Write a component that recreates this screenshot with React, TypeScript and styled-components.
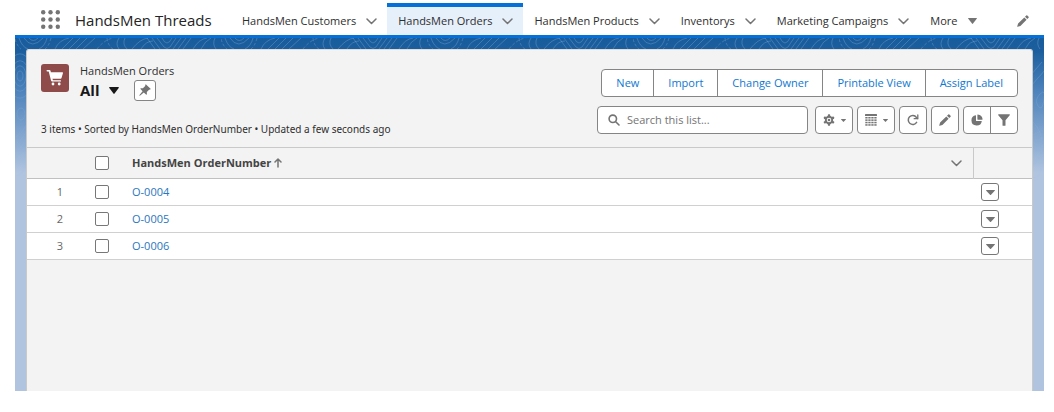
import React from "react";
import styled, { createGlobalStyle, css } from "styled-components";

const GlobalStyle = createGlobalStyle`
  *, *::before, *::after { box-sizing: border-box; }
  html, body, #root { height: 100%; }
  body {
    margin: 0;
    background: #fff;
    color: #2e2e2e;
    font-family: "Open Sans", "Noto Sans", sans-serif;
    font-size: 11px;
    line-height: 16px;
  }
  button, input { font: inherit; color: inherit; margin: 0; }
  svg { display: block; flex: none; }
`;

const Page = styled.div`
  display: flex;
  flex-direction: column;
  min-height: 100%;
  padding: 0 10px 21px 15px;
`;

const NavBar = styled.nav`
  display: flex;
  align-items: stretch;
  height: 35px;
  padding: 3px 15px 0 26px;
  flex: none;
`;

const PlainButton = styled.button`
  display: flex;
  align-items: center;
  justify-content: center;
  padding: 0;
  border: 0;
  background: none;
  color: #747474;
  cursor: pointer;
`;

const AppName = styled.span`
  width: 156px;
  margin-left: 15px;
  padding-top: 4px;
  font-size: 15px;
  line-height: 26px;
  color: #242424;
  white-space: nowrap;
`;

const Tab = styled.div<{ $active?: boolean }>`
  display: flex;
  align-items: center;
  gap: 10px;
  padding: 0 10px 0 11px;
  border-top: 4px solid transparent;
  color: #747474;
  white-space: nowrap;
  ${(p) =>
    p.$active &&
    css`
      border-top-color: #0470d8;
      background: #e6f0fb;
    `}
`;

const TabLink = styled.a`
  color: #2e2e2e;
  text-decoration: none;
`;

const EditNav = styled(PlainButton)`
  margin-left: auto;
  padding-top: 4px;
`;

const Backdrop = styled.main`
  position: relative;
  display: flex;
  flex: 1;
  padding: 11px 11px 0;
  border-top: 3px solid #0470d8;
  background: linear-gradient(#195c9b, #1d5f9e 14px, #4a80ba 50px, #b0c4e0 135px);
`;

const Contours = styled.svg`
  position: absolute;
  inset: 0;
  width: 100%;
  height: 180px;
`;

const Panel = styled.section`
  position: relative;
  flex: 1;
  min-width: 0;
  border: 1px solid #c9c9c9;
  border-top-color: #dcdcdc;
  border-bottom: 0;
  border-radius: 3px 3px 0 0;
  background: #f3f3f3;
`;

const PanelHeader = styled.header`
  display: flex;
  justify-content: space-between;
  height: 97px;
  padding: 14px 14px 0;
`;

const Heading = styled.div`
  display: flex;
  flex-direction: column;
  justify-content: space-between;
  padding-bottom: 10px;
`;

const TitleRow = styled.div`
  display: flex;
  gap: 11px;
`;

const ObjectIcon = styled.span`
  display: grid;
  place-items: center;
  width: 28px;
  height: 28px;
  border-radius: 3px;
  background: #8f4a4a;
`;

const ObjectName = styled.div`
  line-height: 14px;
`;

const ViewRow = styled.div`
  display: flex;
  align-items: center;
  gap: 9px;
  margin-top: 1px;
`;

const ViewName = styled.h1`
  margin: 0;
  font-size: 15px;
  line-height: 22px;
  font-weight: 700;
  color: #181818;
`;

const PinButton = styled(PlainButton)`
  width: 22px;
  height: 21px;
  margin-left: 6px;
  border: 1px solid #858585;
  border-radius: 3px;
  background: #fff;
`;

const Status = styled.p`
  margin: 0;
  font-family: "Noto Sans", sans-serif;
  font-size: 10px;
`;

const Actions = styled.div`
  display: flex;
  flex-direction: column;
  align-items: flex-end;
  gap: 9px;
  padding-top: 5px;
`;

const ButtonGroup = styled.div`
  display: flex;
  border: 1px solid #858585;
  border-radius: 4px;
  background: #fff;
  overflow: hidden;
`;

const ActionButton = styled(PlainButton)`
  height: 26px;
  padding: 0 14px;
  color: #0f78d0;
  & + & { border-left: 1px solid #858585; }
`;

const Toolbar = styled.div`
  display: flex;
  gap: 4px;
`;

const SearchBox = styled.label`
  display: flex;
  align-items: center;
  gap: 7px;
  width: 211px;
  height: 28px;
  margin-right: 3px;
  padding: 0 10px;
  border: 1px solid #858585;
  border-radius: 4px;
  background: #fff;
  color: #747474;
`;

const SearchInput = styled.input`
  flex: 1;
  min-width: 0;
  padding: 0;
  border: 0;
  outline: 0;
  background: none;
  &::placeholder { color: #747474; opacity: 1; }
`;

const ToolButton = styled(PlainButton)<{ $wide?: boolean }>`
  gap: 6px;
  width: ${(p) => (p.$wide ? 36 : 26)}px;
  height: 26px;
  & + & { width: 27px; border-left: 1px solid #858585; }
`;

const Table = styled.table`
  width: 100%;
  table-layout: fixed;
  border-collapse: collapse;
  border-top: 1px solid #c9c9c9;
`;

const Row = styled.tr`
  height: 27px;
  background: #fff;
  border-bottom: 1px solid #d0d0d0;
`;

const HeadRow = styled(Row)`
  height: 31px;
  background: #f3f3f3;
  border-bottom-color: #c0c0c0;
`;

const Col = styled.col<{ $width?: number }>`
  width: ${(p) => (p.$width ? `${p.$width}px` : "auto")};
`;

const Cell = styled.td`
  padding: 0;
`;

const NumberCell = styled(Cell)`
  padding-right: 9px;
  text-align: right;
  color: #666;
`;

const HeadCell = styled.th`
  padding: 0;
  text-align: left;
  font-weight: 700;
  color: #444;
  & + &:last-child { border-left: 1px solid #c9c9c9; }
`;

const SortLabel = styled.div`
  display: flex;
  align-items: center;
  justify-content: space-between;
  padding-right: 11px;
`;

const SortButton = styled(PlainButton)`
  gap: 3px;
  color: #444;
  font-weight: 700;
`;

const Checkbox = styled.input`
  appearance: none;
  display: block;
  width: 14px;
  height: 14px;
  margin: 0 auto;
  border: 1px solid #777;
  border-radius: 2px;
  background: #fff;
`;

const RecordLink = styled.a`
  color: #2a76be;
  text-decoration: none;
`;

const RowMenu = styled(PlainButton)`
  width: 18px;
  height: 18px;
  margin-left: 8px;
  border: 1px solid #777;
  border-radius: 3px;
  background: #fff;
`;

const Chevron = () => (
  <svg width="11" height="7" viewBox="0 0 11 7" fill="none" stroke="currentColor" strokeWidth="1.5" strokeLinecap="round" strokeLinejoin="round">
    <path d="M1 1l4.5 4.5L10 1" />
  </svg>
);

const Caret = ({ width = 9, height = 6, color = "currentColor" }: { width?: number; height?: number; color?: string }) => (
  <svg width={width} height={height} viewBox="0 0 9 6" preserveAspectRatio="none" fill={color}>
    <path d="M.5 0h8q.7.1.2.8L5 5.6q-.5.6-1 0L.3.8Q-.2.1.5 0z" />
  </svg>
);

const Pencil = () => (
  <svg width="12" height="12" viewBox="0 0 12 12" fill="currentColor">
    <path d="M1.1 8.600L7.300 2.400l2.300 2.300-6.200 6.200-2.800.9q-.5.1-.4-.4zM8 1.700L9.300.4q.5-.4 1 0l1.300 1.300q.4.500 0 1L10.300 4z" />
  </svg>
);

const Launcher = () => (
  <svg width="19" height="19" viewBox="0 0 19 19" fill="#747474">
    {[2.2, 9.5, 16.8].map((y) => [2.2, 9.5, 16.8].map((x) => <circle key={`${x}-${y}`} cx={x} cy={y} r="2.200" />))}
  </svg>
);

const Cart = () => (
  <svg width="18" height="18" viewBox="0 0 18 18" fill="#fff">
    <path d="M1.200 1h2.300q.8 0 1 .8l.4 1.500h11.500q.8 0 .6.8l-1.500 5q-.2.700-.9.700H6.500l.4 1.400h7.500q.7 0 .7.700t-.7.700H6.100q-.8 0-1-.8L2.700 2.500H1.200Q.5 2.400.5 1.700T1.200 1z" />
    <circle cx="7" cy="15" r="1.400" />
    <circle cx="13.200" cy="15" r="1.400" />
  </svg>
);

const Pin = () => (
  <svg width="12" height="12" viewBox="0 0 12 12" fill="currentColor">
    <path d="M7 .4l4.600 4.400q.2.600-.5.800l-1 .1-2.300 2.400.1 2q-.2.900-.9.400L4.800 8.400l-3.600 3.200q-.8.400-.9-.3L3.600 7.300 1.500 5.100q-.4-.8.400-.9l2 .1 2.300-2.400.1-1Q6.500.2 7 .4z" />
  </svg>
);

const Search = () => (
  <svg width="12" height="12" viewBox="0 0 12 12" fill="none" stroke="currentColor" strokeWidth="1.600" strokeLinecap="round">
    <circle cx="4.800" cy="4.800" r="3.700" />
    <path d="M7.700 7.700l3.300 3.300" />
  </svg>
);

const Gear = () => (
  <svg width="12" height="12" viewBox="0 0 12 12" fill="currentColor">
    {[0, 60, 120, 180, 240, 300].map((angle) => (
      <path key={angle} d="M4.600 2.600L5 .6q.1-.4.500-.4h1q.4 0 .5.400l.4 2z" transform={`rotate(${angle} 6 6)`} />
    ))}
    <path fillRule="evenodd" d="M6 1.800a4.200 4.200 0 1 1 0 8.400 4.200 4.200 0 0 1 0-8.400zM6 3.700a2.300 2.300 0 1 0 0 4.600 2.300 2.300 0 0 0 0-4.600z" />
    <circle cx="6" cy="6" r="1.300" />
  </svg>
);

const Grid = () => (
  <svg width="12" height="12" viewBox="0 0 12 12" fill="currentColor">
    <rect x="0" y="0" width="12" height="2" rx=".5" />
    {[3, 5.4, 7.8, 10.2].map((y) => [0.3, 3.3, 6.3, 9.3].map((x) => <rect key={`${x}-${y}`} x={x} y={y} width="2.300" height="1.500" />))}
  </svg>
);

const Refresh = () => (
  <svg width="12" height="12" viewBox="0 0 12 12" fill="none" stroke="currentColor" strokeWidth="1.500" strokeLinecap="round">
    <path d="M9.600 8.400A4.500 4.500 0 1 1 9.300 3.200L10.400 4.400" />
    <path strokeWidth="1.300" d="M10.800 1v3.700H7.200" />
  </svg>
);

const Pie = () => (
  <svg width="12" height="12" viewBox="0 0 12 12" fill="currentColor">
    <path d="M5 1.200v5.200q0 .6.600.6h5.200A5.200 5.200 0 1 1 5 1.200zM6.700.4A5.300 5.300 0 0 1 11.600 5.300q0 .4-.4.400H6.800q-.4 0-.4-.4V.8q0-.4.300-.4z" />
  </svg>
);

const Funnel = () => (
  <svg width="12" height="12" viewBox="0 0 12 12" fill="currentColor">
    <path d="M.6.300h10.800q.8.300.3 1L7.500 6.300v4.900q0 .6-.6.600H5.100q-.6 0-.6-.6V6.300L.3 1.300Q-.2.600.6.300z" />
  </svg>
);

const SortArrow = () => (
  <svg width="8" height="10" viewBox="0 0 8 10" fill="none" stroke="#747474" strokeWidth="1.500" strokeLinecap="round" strokeLinejoin="round">
    <path d="M4 9V1M1 4l3-3 3 3" />
  </svg>
);

const tabs = ["HandsMen Customers", "HandsMen Orders", "HandsMen Products", "Inventorys", "Marketing Campaigns"];
const actions = ["New", "Import", "Change Owner", "Printable View", "Assign Label"];
const orders = ["O-0004", "O-0005", "O-0006"];

export default function App() {
  return (
    <>
      <GlobalStyle />
      <Page>
        <NavBar>
          <PlainButton aria-label="App Launcher"><Launcher /></PlainButton>
          <AppName>HandsMen Threads</AppName>
          {tabs.map((t) => (
            <Tab key={t} $active={t === "HandsMen Orders"}>
              <TabLink href="#">{t}</TabLink>
              <PlainButton aria-label={`${t} list`}><Chevron /></PlainButton>
            </Tab>
          ))}
          <Tab>
            <TabLink href="#">More</TabLink>
            <PlainButton aria-label="More items"><Caret /></PlainButton>
          </Tab>
          <EditNav aria-label="Edit navigation"><Pencil /></EditNav>
        </NavBar>
        <Backdrop>
          <Contours aria-hidden="true">
            <defs>
              <linearGradient id="fade" x1="0" y1="0" x2="0" y2="1">
                <stop offset="0" stopColor="#fff" />
                <stop offset="1" stopColor="#fff" stopOpacity="0" />
              </linearGradient>
              <mask id="fadeMask"><rect width="100%" height="100%" fill="url(#fade)" /></mask>
              <pattern id="contour" width="206" height="180" patternUnits="userSpaceOnUse">
                <g fill="none" stroke="#8fbbe6" strokeOpacity=".32">
                  <path d="M14 0q4 5 9 0M9 0q8 12 19 0M4 0q3 9 9 11M32 0q-2 8-8 11" />
                  <path d="M40 11q4-9 14-11M47 11L58 0M54 11L65 0M61 11L72 0M68 11L80 0" />
                  <path strokeDasharray="3 2" d="M36 0q-2 8-6 11M82 11q7-9 16-11M92 0q1 8 6 11M0 1q2 7 6 10" />
                  <path d="M104 0q-4 6 0 11M110 0q-3 6 2 11M117 11q8-10 16-11M126 11q5-8 12-8" />
                  <path d="M132 0l8 11M137 0l8 11M142 0l7 9q3 3 6 0l6-9M147 0q5 10 10 0M166 0l-8 11M171 0l-8 11M176 0l-8 11" />
                  <path d="M178 11q6-10 14-11M186 11q4-8 10-11M200 0q-3 6 1 11" />
                  {[3, 6, 9, 13].map((r) => <ellipse key={r} cx="5" cy="38" rx={r} ry={r * 1.7} />)}
                  <ellipse cx="6" cy="76" rx="4" ry="6" />
                  <path d="M-1 100q8-4 13-14M-1 107q8-5 13-14M-1 114q8-5 13-14M-1 121q8-5 13-14M2 138q6-2 9-12" />
                  <path d="M203 24l-12 14M206 32l-14 16M201 56q-6 6-2 12t6-6-4-6M194 84q10 10 9 24t-10 20M192 98l12-6M192 106l12-6M192 114l12-6M193 140q9 0 9-10" />
                </g>
              </pattern>
            </defs>
            <rect width="100%" height="100%" fill="url(#contour)" mask="url(#fadeMask)" />
          </Contours>
          <Panel>
            <PanelHeader>
              <Heading>
                <TitleRow>
                  <ObjectIcon><Cart /></ObjectIcon>
                  <div>
                    <ObjectName>HandsMen Orders</ObjectName>
                    <ViewRow>
                      <ViewName>All</ViewName>
                      <PlainButton aria-label="Select a list view"><Caret width={10} height={7} color="#181818" /></PlainButton>
                      <PinButton aria-label="Pin this list"><Pin /></PinButton>
                    </ViewRow>
                  </div>
                </TitleRow>
                <Status>3 items • Sorted by HandsMen OrderNumber • Updated a few seconds ago</Status>
              </Heading>
              <Actions>
                <ButtonGroup>
                  {actions.map((a) => <ActionButton key={a}>{a}</ActionButton>)}
                </ButtonGroup>
                <Toolbar>
                  <SearchBox>
                    <Search />
                    <SearchInput type="search" placeholder="Search this list..." aria-label="Search this list" />
                  </SearchBox>
                  <ButtonGroup><ToolButton $wide aria-label="List settings"><Gear /><Caret width={5} height={3} /></ToolButton></ButtonGroup>
                  <ButtonGroup><ToolButton $wide aria-label="Display as"><Grid /><Caret width={5} height={3} /></ToolButton></ButtonGroup>
                  <ButtonGroup><ToolButton aria-label="Refresh"><Refresh /></ToolButton></ButtonGroup>
                  <ButtonGroup><ToolButton aria-label="Edit list"><Pencil /></ToolButton></ButtonGroup>
                  <ButtonGroup>
                    <ToolButton aria-label="Charts"><Pie /></ToolButton>
                    <ToolButton aria-label="Filters"><Funnel /></ToolButton>
                  </ButtonGroup>
                </Toolbar>
              </Actions>
            </PanelHeader>
            <Table>
              <colgroup>
                <Col $width={45} />
                <Col $width={60} />
                <Col />
                <Col $width={59} />
              </colgroup>
              <thead>
                <HeadRow>
                  <Cell />
                  <Cell><Checkbox type="checkbox" aria-label="Select all" /></Cell>
                  <HeadCell>
                    <SortLabel>
                      <SortButton>HandsMen OrderNumber<SortArrow /></SortButton>
                      <PlainButton aria-label="Column actions"><Chevron /></PlainButton>
                    </SortLabel>
                  </HeadCell>
                  <HeadCell aria-label="Actions" />
                </HeadRow>
              </thead>
              <tbody>
                {orders.map((o, i) => (
                  <Row key={o}>
                    <NumberCell>{i + 1}</NumberCell>
                    <Cell><Checkbox type="checkbox" aria-label={`Select ${o}`} /></Cell>
                    <Cell><RecordLink href="#">{o}</RecordLink></Cell>
                    <Cell><RowMenu aria-label={`Actions for ${o}`}><Caret width={9} height={5} /></RowMenu></Cell>
                  </Row>
                ))}
              </tbody>
            </Table>
          </Panel>
        </Backdrop>
      </Page>
    </>
  );
}
